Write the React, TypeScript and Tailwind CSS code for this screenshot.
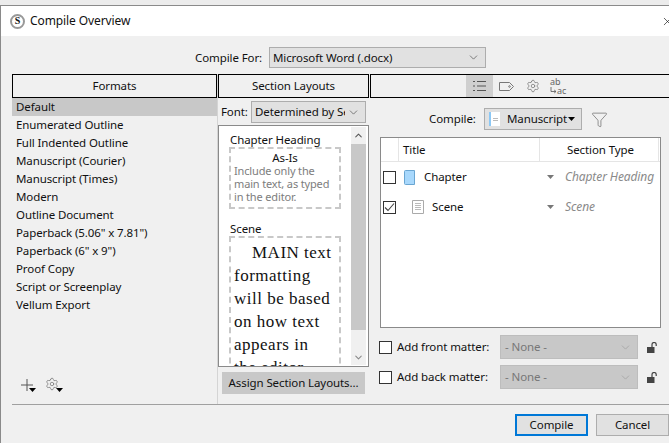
import { ChevronDown, ChevronUp, X, Filter, Settings } from "lucide-react";

const formats = [
  "Default",
  "Enumerated Outline",
  "Full Indented Outline",
  "Manuscript (Courier)",
  "Manuscript (Times)",
  "Modern",
  "Outline Document",
  'Paperback (5.06" x 7.81")',
  'Paperback (6" x 9")',
  "Proof Copy",
  "Script or Screenplay",
  "Vellum Export",
];

const Caret = ({ className = "" }: { className?: string }) => (
  <svg width="7" height="4" viewBox="0 0 7 4" className={`shrink-0 ${className}`}>
    <path d="M0 0h7L3.5 4z" fill="currentColor" />
  </svg>
);

const CheckBox = ({ checked = false }: { checked?: boolean }) => (
  <div className="flex h-[13px] w-[13px] shrink-0 items-center justify-center border border-[#333] bg-white">
    {checked && (
      <svg width="11" height="11" viewBox="0 0 11 11" fill="none" stroke="#444" strokeWidth="1.1">
        <path d="M1 5.5l3 3 6-7" />
      </svg>
    )}
  </div>
);

const Select = ({ text, className }: { text: string; className: string }) => (
  <div className={`flex items-center border border-[#adadad] bg-[#e1e1e1] pl-[3px] pr-[5px] ${className}`}>
    <span className="min-w-0 flex-1 overflow-hidden whitespace-nowrap">{text}</span>
    <ChevronDown size={13} strokeWidth={1.2} className="ml-[2px] shrink-0 text-[#444]" />
  </div>
);

const OpenLock = () => (
  <svg width="11" height="11" viewBox="0 0 11 11" className="ml-[9px]">
    <path d="M0 5h7.5v6H0z" fill="#444" />
    <path d="M5 5V2.6a2.1 2.1 0 0 1 4.2 0V4" fill="none" stroke="#444" strokeWidth="1.2" />
  </svg>
);

const MatterRow = ({ label }: { label: string }) => (
  <div className="flex h-[24px] items-center">
    <CheckBox />
    <span className="ml-[5px] w-[103px] whitespace-nowrap">{label}</span>
    <div className="flex h-[24px] w-[138px] items-center border border-[#bdbdbd] bg-[#c8c8c8] pl-[4px] pr-[5px] text-[#777]">
      <span className="flex-1">- None -</span>
      <ChevronDown size={13} strokeWidth={1.2} className="text-[#999]" />
    </div>
    <OpenLock />
  </div>
);

const App = () => {
  return (
    <div className="h-[443px] w-[669px] overflow-hidden bg-[#f0f0f0] font-['Noto_Sans',sans-serif] text-[11.5px] leading-[16px] tracking-[-0.1px] text-[#111]">
      <div className="h-[5px] bg-[#ececec]" />
      <div className="h-[438px] border-l border-t border-[#8a8a8a]">
        {/* Title bar */}
        <div className="flex h-[30px] items-center bg-white pl-[9px]">
          <div className="flex h-[15px] w-[15px] items-center justify-center rounded-full border-2 border-[#999] bg-white font-['Liberation_Serif',serif] text-[10px] font-bold leading-none">
            S
          </div>
          <span className="ml-[5px] flex-1 text-[12px]">Compile Overview</span>
          <X size={13} strokeWidth={1.2} className="mr-[-5px]" />
        </div>

        {/* Compile For */}
        <div className="flex h-[38px] items-start pl-[194px] pt-[11px]">
          <span className="w-[68px] whitespace-nowrap leading-[21px]">Compile For:</span>
          <Select text="Microsoft Word (.docx)" className="ml-[6px] h-[21px] w-[217px]" />
        </div>

        {/* Columns */}
        <div className="flex h-[330px] pl-[11px]">
          {/* Formats */}
          <div className="relative flex w-[205px] shrink-0 flex-col">
            <div className="flex h-[24px] items-center justify-center border border-black">Formats</div>
            <div className="flex flex-col">
              {formats.map((name, i) => (
                <div
                  key={name}
                  className={`h-[18px] pl-[4px] leading-[18px] ${i === 0 ? "bg-[#c8c8c8]" : ""}`}
                >
                  {name}
                </div>
              ))}
            </div>
            <div className="mt-[63px] flex items-end pl-[9px]">
              <div className="flex items-end">
                <svg width="12" height="12" viewBox="0 0 12 12" stroke="#555" strokeWidth="1">
                  <path d="M6 0v12M0 6h12" />
                </svg>
                <Caret className="mb-[-1px] ml-[-4px] text-black" />
              </div>
              <div className="ml-[9px] flex items-end">
                <Settings size={14} strokeWidth={1.3} className="text-[#777]" />
                <Caret className="mb-[-1px] ml-[-3px] text-black" />
              </div>
            </div>
          </div>

          {/* Section Layouts */}
          <div className="flex w-[153px] shrink-0 flex-col border-l border-[#d4d4d4] pb-[7px]">
            <div className="mr-[1px] flex h-[24px] items-center justify-center border border-black">
              Section Layouts
            </div>
            <div className="mt-[3px] flex h-[22px] items-center pl-[3px]">
              <span className="w-[27px]">Font:</span>
              <Select text="Determined by Section Layout" className="ml-[3px] h-[22px] w-[115px]" />
            </div>
            <div className="relative mt-[2px] h-[242px] w-[151px] overflow-hidden border border-[#8a8a8a] bg-white">
              <div className="w-[133px] pl-[10px] pt-[7px]">
                <div className="pl-[1px] leading-[14px]">Chapter Heading</div>
                <div className="h-[62px] w-[112px] border-2 border-dashed border-[#c8c8c8] px-[3px]">
                  <div className="pt-[1px] text-center leading-[15px]">As-Is</div>
                  <div className="mt-[-1px] text-[11px] leading-[13px] tracking-[-0.15px] text-[#7d7d7d]">
                    Include only the main text, as typed in the editor.
                  </div>
                </div>
                <div className="mt-[12px] pl-[1px] leading-[15px]">Scene</div>
                <div className="w-[112px] border-2 border-dashed border-[#c8c8c8] pl-[3px] pr-[6px] pt-[3px] font-['Liberation_Serif',serif] text-[17px] leading-[23px] tracking-[0.5px] [text-indent:18px]">
                  MAIN text formatting will be based on how text appears in the editor. Paragraph
                </div>
              </div>
              {/* Scrollbar */}
              <div className="absolute bottom-[1px] right-[2px] top-[1px] flex w-[15px] flex-col items-center bg-[#f0f0f0]">
                <ChevronUp size={11} strokeWidth={2.2} className="mt-[3px] shrink-0 text-[#555]" />
                <div className="mt-[3px] h-[186px] w-full shrink-0 bg-[#c8c8c8]" />
                <ChevronDown size={11} strokeWidth={2.2} className="mt-[22px] shrink-0 text-[#888]" />
              </div>
            </div>
            <div className="ml-[4px] mt-[5px] flex h-[22px] w-[143px] items-center justify-center whitespace-nowrap bg-[#c8c8c8]">
              Assign Section Layouts...
            </div>
          </div>

          {/* Compile contents */}
          <div className="flex min-w-0 flex-1 flex-col">
            <div className="mr-[-2px] flex h-[24px] items-center border border-black pl-[95px]">
              <div className="flex h-[22px] w-[27px] items-center justify-center bg-[#cfcfcf]">
                <svg width="13" height="12" viewBox="0 0 13 12" fill="none" stroke="#555" strokeWidth="1">
                  <path d="M0 1.5h2M4 1.5h9M0 6h2M4 6h9M0 10.5h2M4 10.5h9" />
                </svg>
              </div>
              <svg width="15" height="9" viewBox="0 0 15 9" fill="none" stroke="#777" className="ml-[6px]">
                <path d="M.5.5h10l4 4-4 4H.5z" />
                <circle cx="10.5" cy="4.5" r=".8" />
              </svg>
              <Settings size={14} strokeWidth={1.3} className="ml-[12px] text-[#777]" />
              <div className="ml-[10px] flex w-[20px] flex-col text-[9px] leading-[9px] text-[#666]">
                <span>ab</span>
                <div className="flex items-center">
                  <svg width="7" height="7" viewBox="0 0 7 7" fill="none" stroke="#666" strokeWidth=".9" className="shrink-0">
                    <path d="M1 0v4.5h5M4.2 3l1.8 1.5L4.2 6" />
                  </svg>
                  <span>ac</span>
                </div>
              </div>
            </div>
            <div className="mt-[10px] flex h-[22px] items-center pl-[59px]">
              <span className="w-[48px] whitespace-nowrap">Compile:</span>
              <div className="ml-[7px] flex h-[22px] w-[98px] items-center border border-[#adadad] bg-[#e1e1e1] pl-[4px]">
                <div className="flex h-[14px] w-[11px] shrink-0 items-center justify-center border-l-2 border-[#8cc8f5] bg-white">
                  <div className="h-[3px] w-[5px] border-y border-[#bbb]" />
                </div>
                <span className="ml-[7px] w-[61px] whitespace-nowrap">Manuscript</span>
                <Caret className="text-black" />
              </div>
              <Filter size={17} strokeWidth={1} className="ml-[9px] text-[#666]" />
            </div>

            {/* Table */}
            <div className="ml-[10px] mt-[7px] h-[191px] w-[281px] border border-[#8a8a8a] bg-white">
              <div className="flex h-[24px] border-b border-[#e5e5e5]">
                <div className="w-[18px] border-r border-[#e5e5e5]" />
                <div className="w-[141px] border-r border-[#e5e5e5] pl-[4px] leading-[23px]">Title</div>
                <div className="w-[119px] border-r border-[#e5e5e5] pl-[27px] leading-[23px]">Section Type</div>
              </div>
              <div className="flex h-[30px] items-center pl-[2px]">
                <CheckBox />
                <svg width="12" height="15" viewBox="0 0 12 15" className="ml-[8px] shrink-0">
                  <path d="M.5 1.5q0-1 1-1h9v14h-9q-1 0-1-1z" fill="#a8d8fc" stroke="#6aa6d2" />
                </svg>
                <span className="ml-[8px] w-[123px]">Chapter</span>
                <Caret className="text-[#777]" />
                <span className="ml-[11px] whitespace-nowrap text-[12px] italic text-[#8a8a8a]">Chapter Heading</span>
              </div>
              <div className="flex h-[30px] items-center pl-[2px]">
                <CheckBox checked />
                <svg width="12" height="14" viewBox="0 0 12 14" fill="none" stroke="#aaa" className="ml-[16px] shrink-0">
                  <path d="M.5.5h11v13H.5z" />
                  <path d="M3 3.5h6M3 5.5h6M3 7.5h6M3 9.5h6" strokeWidth=".8" />
                </svg>
                <span className="ml-[8px] w-[115px]">Scene</span>
                <Caret className="text-[#777]" />
                <span className="ml-[11px] text-[12px] italic text-[#8a8a8a]">Scene</span>
              </div>
            </div>

            <div className="ml-[9px] mt-[7px] flex flex-col gap-[6px]">
              <MatterRow label="Add front matter:" />
              <MatterRow label="Add back matter:" />
            </div>
          </div>
        </div>

        {/* Footer */}
        <div className="ml-[11px] flex h-[39px] items-start border-t border-[#a0a0a0] pl-[503px] pt-[9px]">
          <div className="flex h-[22px] w-[73px] items-center justify-center border-2 border-[#0078d7] bg-[#e1e1e1]">
            Compile
          </div>
          <div className="ml-[8px] flex h-[22px] w-[73px] shrink-0 items-center justify-center border border-[#adadad] bg-[#e1e1e1]">
            Cancel
          </div>
        </div>
      </div>
    </div>
  );
};

export default App;
